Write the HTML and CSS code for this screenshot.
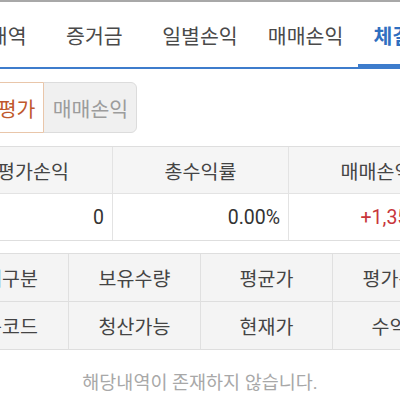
FILE: index.html
```html
<!DOCTYPE html>
<html lang="ko">
<head>
<meta charset="utf-8">
<link rel="stylesheet" href="styles.css">
</head>
<body>
<div class="page">
  <nav class="tabs">
    <div class="tab">잔고내역</div>
    <div class="tab">증거금</div>
    <div class="tab">일별손익</div>
    <div class="tab">매매손익</div>
    <div class="tab active">체결내역</div>
  </nav>
  <div class="seg">
    <button class="seg-btn on">잔고평가</button>
    <button class="seg-btn off">매매손익</button>
  </div>
  <div class="summary">
    <div class="hcell">총평가손익</div>
    <div class="hcell">총수익률</div>
    <div class="hcell">매매손익</div>
    <div class="dcell">0</div>
    <div class="dcell">0.00%</div>
    <div class="dcell red">+1,350,000</div>
  </div>
  <div class="grid">
    <div class="gcell">매매구분</div>
    <div class="gcell">보유수량</div>
    <div class="gcell">평균가</div>
    <div class="gcell">평가손익</div>
    <div class="gcell">종목코드</div>
    <div class="gcell">청산가능</div>
    <div class="gcell">현재가</div>
    <div class="gcell">수익률</div>
  </div>
  <p class="empty">해당내역이 존재하지 않습니다.</p>
</div>
</body>
</html>
```
FILE: styles.css
```css
html, body {
  margin: 0;
  padding: 0;
  background: #fff;
  overflow: hidden;
}
body {
  font-family: Roboto, "Noto Sans CJK KR", sans-serif;
  color: #333;
}
.page {
  width: 528px;
  margin-left: -64px;
}
.tabs {
  display: flex;
  border-top: 2px solid #a8a8a8;
  border-bottom: 2px solid #3d7ccc;
  height: 65px;
}
.tab {
  flex: 1;
  display: flex;
  align-items: center;
  justify-content: center;
  font-size: 20.5px;
  color: #4a4a4a;
  padding-top: 1px;
  box-sizing: border-box;
}
.tab.active {
  color: #2f6fc0;
  font-weight: bold;
  box-shadow: inset 0 -3px 0 #3d7ccc;
}
.seg {
  display: flex;
  padding: 13px 0 0 15px;
}
.seg-btn {
  font-family: Roboto, "Noto Sans CJK KR", sans-serif;
  font-size: 20.5px;
  height: 51px;
  padding: 0 8px;
  margin: 0;
  box-sizing: border-box;
}
.seg-btn.on {
  background: #fff;
  color: #c0582c;
  border: 1px solid #e9c6aa;
  border-radius: 6px 0 0 6px;
  position: relative;
  z-index: 1;
}
.seg-btn.off {
  background: #f0f0f0;
  color: #9c9c9c;
  border: 1px solid #dcdcdc;
  border-radius: 0 6px 6px 0;
  margin-left: -1px;
  width: 94px;
}
.summary {
  display: grid;
  grid-template-columns: 176px 176px 176px;
  margin-top: 13px;
  border-top: 1px solid #dedede;
  border-bottom: 1px solid #dedede;
}
.hcell, .dcell {
  height: 46px;
  display: flex;
  align-items: center;
  font-size: 19.5px;
  box-sizing: border-box;
}
.hcell {
  background: #f5f5f5;
  color: #444;
  justify-content: center;
  border-bottom: 1px solid #e3e3e3;
  height: 47px;
}
.hcell + .hcell, .dcell + .dcell {
  border-left: 1px solid #e3e3e3;
}
.dcell {
  justify-content: flex-end;
  padding-right: 8px;
  color: #333;
}
.dcell.red {
  color: #c8363c;
}
.grid {
  display: grid;
  grid-template-columns: repeat(4, 132px);
  margin-top: 12px;
  border-top: 1px solid #dedede;
  background: #f4f4f4;
}
.gcell {
  height: 48px;
  display: flex;
  align-items: center;
  justify-content: center;
  font-size: 19.5px;
  color: #444;
  border-bottom: 1px solid #dedede;
  box-sizing: border-box;
}
.gcell:not(:nth-child(4n+1)) {
  border-left: 1px solid #e0e0e0;
}
.empty {
  margin: 21px 0 0 64px;
  width: 400px;
  text-align: center;
  font-size: 18.5px;
  line-height: 24px;
  color: #a8a8a8;
}
```
